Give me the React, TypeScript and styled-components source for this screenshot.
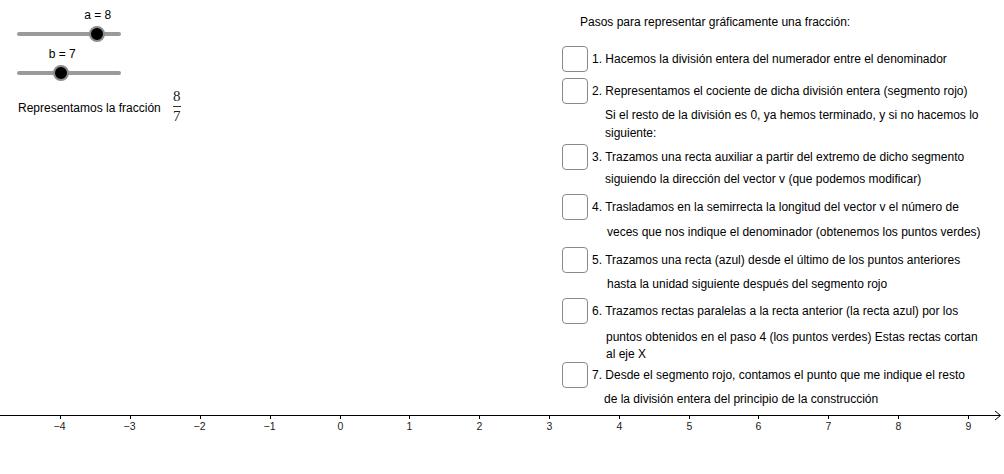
import * as React from "react";
import styled, { createGlobalStyle } from "styled-components";

const GlobalStyle = createGlobalStyle`
  html, body {
    margin: 0;
    padding: 0;
    background: #fff;
  }
  body {
    font-family: "Liberation Sans", Arial, sans-serif;
    color: #000;
  }
`;

const Canvas = styled.div`
  width: 1004px;
  height: 474px;
  display: flex;
  flex-direction: column;
  overflow: hidden;
  background: #fff;
`;

const Top = styled.div`
  display: grid;
  grid-template-columns: 562px 1fr;
  height: 405px;
`;

const LeftPanel = styled.div`
  padding: 8px 0 0 17px;
  display: flex;
  flex-direction: column;
`;

const SliderBlock = styled.div<{ $gap: number }>`
  width: 104px;
  margin-top: ${(p) => p.$gap}px;
`;

const LabelRow = styled.div`
  position: relative;
  height: 14px;
`;

const SliderLabel = styled.span`
  position: absolute;
  top: 0;
  transform: translateX(-50%);
  font-size: 12px;
  line-height: 14px;
  white-space: nowrap;
`;

const TrackRow = styled.div`
  height: 14px;
  margin-top: 5px;
  display: flex;
  align-items: center;
`;

const Track = styled.div`
  position: relative;
  width: 100%;
  height: 4px;
  border-radius: 2px;
  background: #9a9a9a;
`;

const Knob = styled.div`
  position: absolute;
  top: 50%;
  width: 12px;
  height: 12px;
  border-radius: 50%;
  background: #000;
  border: 2.5px solid #8c8c8c;
  transform: translate(-50%, -50%);
`;

const FractionRow = styled.div`
  display: flex;
  align-items: center;
  margin-top: 8px;
  margin-left: 1px;
  gap: 12px;
`;

const Caption = styled.span`
  font-size: 12px;
  line-height: 14px;
  padding-top: 3px;
`;

const Fraction = styled.span`
  display: inline-flex;
  flex-direction: column;
  align-items: center;
  font-family: "Liberation Serif", "Times New Roman", serif;
  font-size: 15px;
  line-height: 16px;
  color: #222;
`;

const FracBar = styled.span`
  width: 8px;
  height: 1px;
  background: #333;
  margin: 2px 0 1px;
`;

const RightPanel = styled.div`
  padding-top: 15px;
  display: flex;
  flex-direction: column;
`;

const Title = styled.div`
  font-size: 12px;
  line-height: 14px;
  margin-left: 18px;
`;

const StepRow = styled.div<{ $gap: number }>`
  display: flex;
  align-items: center;
  gap: 4px;
  height: 26px;
  margin-top: ${(p) => p.$gap}px;
`;

const CheckBox = styled.div`
  width: 26px;
  height: 26px;
  box-sizing: border-box;
  border: 1.5px solid #8a8a8a;
  border-radius: 4px;
  background: #fff;
  flex: none;
`;

const StepText = styled.span`
  font-size: 12px;
  line-height: 14px;
  white-space: nowrap;
`;

const Note = styled.div<{ $gap: number; $indent: number }>`
  font-size: 12px;
  line-height: 14px;
  white-space: nowrap;
  margin-top: ${(p) => p.$gap}px;
  margin-left: ${(p) => p.$indent}px;
`;

const AxisSvg = styled.svg`
  display: block;
  width: 1004px;
  height: 69px;
`;

type Slide = { name: string; value: number; pct: number; gap: number };

const sliders: Slide[] = [
  { name: "a", value: 8, pct: 76.6, gap: 0 },
  { name: "b", value: 7, pct: 42.5, gap: 6 },
];

type Line =
  | { kind: "step"; text: string; gap: number }
  | { kind: "note"; text: string; gap: number; indent: number };

const lines: Line[] = [
  { kind: "step", text: "1. Hacemos la división entera del numerador entre el denominador", gap: 17 },
  { kind: "step", text: "2. Representamos el cociente de dicha división entera (segmento rojo)", gap: 6 },
  { kind: "note", text: "Si el resto de la división es 0, ya hemos terminado, y si no hacemos lo", gap: 4, indent: 43 },
  { kind: "note", text: "siguiente:", gap: 4, indent: 43 },
  { kind: "step", text: "3. Trazamos una recta auxiliar a partir del extremo de dicho segmento", gap: 4 },
  { kind: "note", text: "siguiendo la dirección del vector v (que podemos modificar)", gap: 2, indent: 43 },
  { kind: "step", text: "4. Trasladamos en la semirrecta la longitud del vector v el número de", gap: 8 },
  { kind: "note", text: "veces que nos indique el denominador (obtenemos los puntos verdes)", gap: 5, indent: 45 },
  { kind: "step", text: "5. Trazamos una recta (azul) desde el último de los puntos anteriores", gap: 8 },
  { kind: "note", text: "hasta la unidad siguiente después del segmento rojo", gap: 4, indent: 45 },
  { kind: "step", text: "6. Trazamos rectas paralelas a la recta anterior (la recta azul) por los", gap: 7 },
  { kind: "note", text: "puntos obtenidos en el paso 4 (los puntos verdes) Estas rectas cortan", gap: 6, indent: 44 },
  { kind: "note", text: "al eje X", gap: 3, indent: 44 },
  { kind: "step", text: "7. Desde el segmento rojo, contamos el punto que me indique el resto", gap: 1 },
  { kind: "note", text: "de la división entera del principio de la construcción", gap: 4, indent: 42 },
];

const ORIGIN = 339.5;
const UNIT = 69.8;
const ticks = Array.from({ length: 14 }, (_, i) => i - 4);

const Slider = ({ s }: { s: Slide }) => (
  <SliderBlock $gap={s.gap}>
    <LabelRow>
      <SliderLabel style={{ left: `${s.pct + 1}%` }}>
        {s.name} = {s.value}
      </SliderLabel>
    </LabelRow>
    <TrackRow>
      <Track>
        <Knob style={{ left: `${s.pct}%` }} />
      </Track>
    </TrackRow>
  </SliderBlock>
);

const Axis = () => (
  <AxisSvg viewBox="0 0 1004 69">
    <line x1="0" y1="10.5" x2="1000" y2="10.5" stroke="#000" strokeWidth="1" />
    <polyline points="995,6 1000.5,10.5 995,15" fill="none" stroke="#000" strokeWidth="1" />
    {ticks.map((k) => {
      const x = Math.round(ORIGIN + k * UNIT) + 0.5;
      return (
        <g key={k}>
          <line x1={x} y1="10" x2={x} y2="14" stroke="#000" strokeWidth="1" />
          <text
            x={k < 0 ? x - 1 : x}
            y="25"
            textAnchor="middle"
            fontSize="10.5"
            fontFamily="'Liberation Sans', Arial, sans-serif"
            fill="#222"
          >
            {k < 0 ? `\u2212${-k}` : k}
          </text>
        </g>
      );
    })}
  </AxisSvg>
);

export default function App() {
  return (
    <>
      <GlobalStyle />
      <Canvas>
        <Top>
          <LeftPanel>
            {sliders.map((s) => (
              <Slider key={s.name} s={s} />
            ))}
            <FractionRow>
              <Caption>Representamos la fracción</Caption>
              <Fraction>
                <span>8</span>
                <FracBar />
                <span>7</span>
              </Fraction>
            </FractionRow>
          </LeftPanel>
          <RightPanel>
            <Title>Pasos para representar gráficamente una fracción:</Title>
            {lines.map((l, i) =>
              l.kind === "step" ? (
                <StepRow key={i} $gap={l.gap}>
                  <CheckBox />
                  <StepText>{l.text}</StepText>
                </StepRow>
              ) : (
                <Note key={i} $gap={l.gap} $indent={l.indent}>
                  {l.text}
                </Note>
              )
            )}
          </RightPanel>
        </Top>
        <Axis />
      </Canvas>
    </>
  );
}
